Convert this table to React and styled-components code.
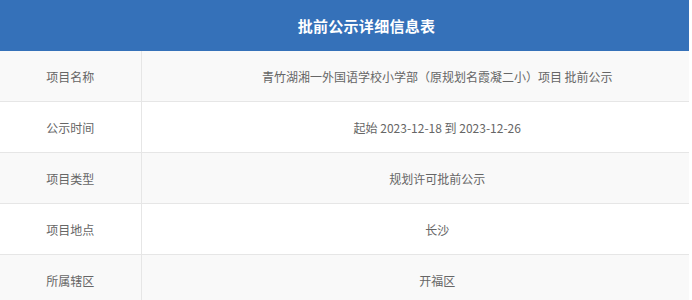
import styled, { createGlobalStyle } from "styled-components";

const GlobalStyle = createGlobalStyle`
  html, body {
    margin: 0;
    padding: 0;
    background: #fff;
  }
  body {
    font-family: "Microsoft YaHei", "Noto Sans CJK SC", "Noto Sans", sans-serif;
  }
`;

const Viewport = styled.div`
  width: 689px;
  overflow: hidden;
`;

const Table = styled.table`
  width: 733px;
  border-collapse: collapse;
  table-layout: fixed;
`;

const TitleCell = styled.th`
  height: 51px;
  padding: 0;
  background: #3571b9;
  color: #fff;
  font-size: 15px;
  font-weight: bold;
  text-align: center;
  letter-spacing: 0.3px;
`;

const Row = styled.tr`
  background: ${(p) => (p.$odd ? "#f9f9f9" : "#fff")};
  border-bottom: 1px solid #e6e6e6;
`;

const Cell = styled.td`
  height: 50px;
  padding: 0;
  font-size: 12px;
  color: #666;
  text-align: center;
  border-right: ${(p) => (p.$label ? "1px solid #e6e6e6" : "none")};
`;

const rows = [
  ["项目名称", "青竹湖湘一外国语学校小学部（原规划名霞凝二小）项目 批前公示"],
  ["公示时间", "起始 2023-12-18 到 2023-12-26"],
  ["项目类型", "规划许可批前公示"],
  ["项目地点", "长沙"],
  ["所属辖区", "开福区"],
];

export default function App() {
  return (
    <>
      <GlobalStyle />
      <Viewport>
        <Table>
          <colgroup>
            <col style={{ width: 141 }} />
            <col />
          </colgroup>
          <thead>
            <tr>
              <TitleCell colSpan={2}>批前公示详细信息表</TitleCell>
            </tr>
          </thead>
          <tbody>
            {rows.map(([label, value], i) => (
              <Row key={label} $odd={i % 2 === 0}>
                <Cell $label>{label}</Cell>
                <Cell>{value}</Cell>
              </Row>
            ))}
          </tbody>
        </Table>
      </Viewport>
    </>
  );
}
